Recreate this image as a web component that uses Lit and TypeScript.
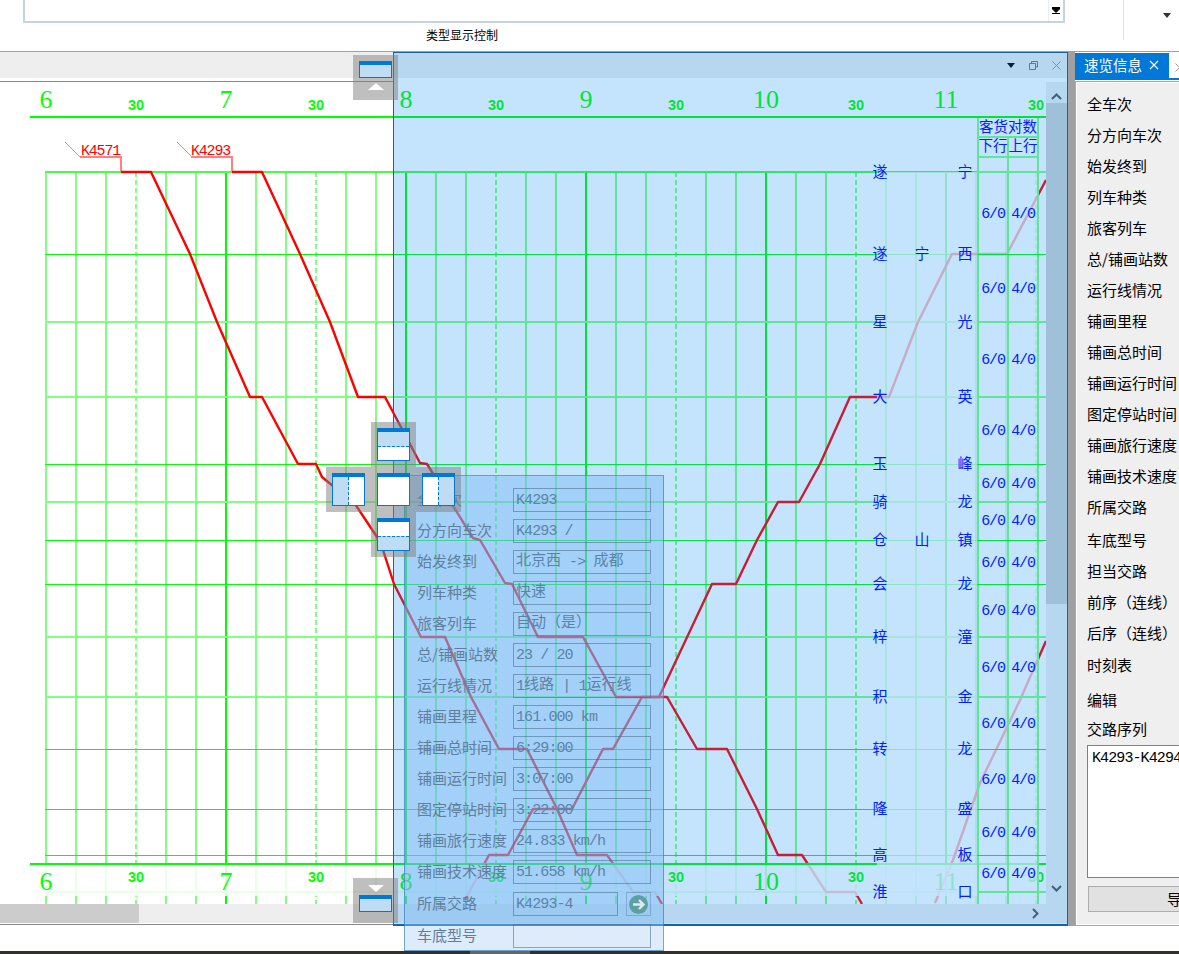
import { LitElement, html, svg, css } from "lit";
import { customElement } from "lit/decorators.js";

type Pt = [number, number];

const HOUR_LABELS = ["6", "7", "8", "9", "10", "11"];

// y of each station row: [y, left char, middle char, right char, thin line?]
const STATIONS: [number, string, string, string, boolean][] = [
  [172, "遂", "", "宁", false],
  [254, "遂", "宁", "西", true],
  [322, "星", "", "光", false],
  [397, "大", "", "英", false],
  [464, "玉", "", "峰", true],
  [502, "骑", "", "龙", false],
  [540, "仓", "山", "镇", true],
  [584, "会", "", "龙", true],
  [637, "梓", "", "潼", false],
  [697, "积", "", "金", false],
  [749, "转", "", "龙", true],
  [809, "隆", "", "盛", true],
  [855, "高", "", "板", true],
  [892, "淮", "", "口", false],
];

const COUNT_ROWS = [214, 289, 360, 431, 484, 521, 563, 611, 668, 724, 780, 833, 874];

const TRAINS: Pt[][] = [
  [[121, 172], [151, 172], [190, 254], [217, 322], [250, 397], [262, 397], [298, 464], [316, 464], [322, 477], [355, 504], [377, 537], [383, 550], [394, 584], [421, 637], [445, 637], [471, 697], [499, 749], [527, 749], [557, 809], [577, 855], [607, 855], [633, 892], [655, 892], [662, 904]],
  [[232, 172], [262, 172], [300, 254], [330, 322], [358, 397], [385, 397], [420, 463], [427, 464], [473, 538], [480, 540], [505, 583], [512, 584], [538, 637], [583, 637], [616, 697], [667, 697], [697, 749], [727, 749], [757, 809], [778, 855], [802, 855], [826, 892], [855, 892], [862, 904]],
  [[465, 900], [489, 855], [508, 855], [533, 809], [572, 809], [603, 749], [613, 749], [642, 697], [659, 697], [712, 584], [736, 584], [757, 540], [778, 502], [799, 502], [820, 464], [850, 397], [889, 397], [918, 322], [952, 254], [1007, 254], [1046, 180]],
  [[935, 903], [953, 860], [980, 783], [1020, 700], [1046, 641]],
];

const FLOAT_ROWS = [
  ["全车次", "K4293"],
  ["分方向车次", "K4293 /"],
  ["始发终到", "北京西 -> 成都"],
  ["列车种类", "快速"],
  ["旅客列车", "自动（是）"],
  ["总/铺画站数", "23 / 20"],
  ["运行线情况", "1线路 | 1运行线"],
  ["铺画里程", "161.000 km"],
  ["铺画总时间", "6:29:00"],
  ["铺画运行时间", "3:07:00"],
  ["图定停站时间", "3:22:00"],
  ["铺画旅行速度", "24.833 km/h"],
  ["铺画技术速度", "51.658 km/h"],
];

const SIDE_LABELS = [
  "全车次", "分方向车次", "始发终到", "列车种类", "旅客列车", "总/铺画站数", "运行线情况",
  "铺画里程", "铺画总时间", "铺画运行时间", "图定停站时间", "铺画旅行速度", "铺画技术速度",
  "所属交路", "车底型号", "担当交路", "前序（连线）", "后序（连线）",
];

// split mixed values so the latin keeps its narrow advance and the CJK stays full width
const runs = (value: string) =>
  value.split(/([\u3000-\u9fff\uff00-\uffef]+)/).map((part, i) =>
    i % 2 ? html`<span class="cjk">${part}</span>` : part);

@customElement("train-graph")
export class TrainGraph extends LitElement {
  static styles = css`
    :host {
      display: block;
      width: 1046px;
      height: 822px;
      flex: none;
    }
    svg {
      display: block;
    }
    .hour {
      font: 26px "Liberation Serif", serif;
      fill: #00ff00;
      text-anchor: middle;
    }
    .half {
      font: bold 14.5px "Liberation Sans", sans-serif;
      fill: #00ff00;
      text-anchor: middle;
    }
    .station {
      font: 15px "Noto Sans CJK SC", sans-serif;
      fill: #0000ff;
      text-anchor: middle;
      dominant-baseline: central;
    }
    .header {
      font: 14.5px "Noto Sans CJK SC", sans-serif;
      fill: #0000ff;
      text-anchor: middle;
      dominant-baseline: central;
    }
    .count {
      font: 15px "Liberation Mono", monospace;
      letter-spacing: -1.2px;
      fill: #0000ff;
      text-anchor: middle;
      dominant-baseline: central;
    }
    .train-no {
      font: 15px "Liberation Mono", monospace;
      letter-spacing: -1.2px;
      fill: #ff0000;
    }
    .crisp {
      shape-rendering: crispEdges;
    }
    .run {
      fill: none;
      stroke: #ff0000;
      stroke-width: 2.4;
      stroke-linejoin: round;
    }
    .leader {
      fill: none;
      stroke: #ff8080;
      stroke-width: 2;
    }
    .leader-thin {
      fill: none;
      stroke: #ff8080;
      stroke-width: 1;
    }
    .dash {
      stroke: #80ff80;
      stroke-width: 2;
      stroke-dasharray: 5 3;
    }
  `;

  private grid() {
    const out = [];
    for (let i = 0; i < 34; i++) {
      const x = 45 + i * 30;
      if (i % 6 === 3) {
        out.push(svg`<line class="dash crisp" x1=${x + 1} x2=${x + 1} y1="172" y2="904"></line>`);
      } else {
        out.push(svg`<rect class="crisp" x=${x} y="172" width="2" height="732"
          fill=${i % 6 === 0 && i > 0 ? "#00ff00" : "#80ff80"}></rect>`);
      }
    }
    for (const [y, , , , thin] of STATIONS) {
      out.push(thin
        ? svg`<rect class="crisp" x="45" y=${y} width="1001" height="1" fill="#00ff00"></rect>`
        : svg`<rect class="crisp" x="45" y=${y - 1} width="1001" height="2" fill=${y === 172 ? "#44ff44" : "#80ff80"}></rect>`);
    }
    return out;
  }

  private rulerLabels(hourY: number, halfY: number) {
    return HOUR_LABELS.map((label, i) => {
      const x = 46 + i * 180;
      return svg`
        <text class="hour" x=${x} y=${hourY}>${label}</text>
        <text class="half" x=${x + 90} y=${halfY}>30</text>`;
    });
  }

  // the count columns on the right sit above the pale station band
  private countColumns() {
    const out = [];
    for (const x of [977, 1037]) {
      out.push(svg`<rect class="crisp" x=${x} y="118" width="2" height="786" fill="#80ff80"></rect>`);
    }
    out.push(svg`<rect class="crisp" x="1007" y="136" width="2" height="768" fill="#80ff80"></rect>`);
    out.push(svg`<rect class="crisp" x="977" y="136" width="62" height="2" fill="#80ff80"></rect>`);
    out.push(svg`<rect class="crisp" x="977" y="156" width="62" height="2" fill="#80ff80"></rect>`);
    for (const [y, , , , thin] of STATIONS) {
      out.push(thin
        ? svg`<rect class="crisp" x="977" y=${y} width="69" height="1" fill="#00ff00"></rect>`
        : svg`<rect class="crisp" x="977" y=${y - 1} width="69" height="2" fill="#80ff80"></rect>`);
    }
    return out;
  }

  render() {
    return html`
      <svg width="1046" height="822" viewBox="0 82 1046 822">
        <rect class="crisp" x="30" y="116" width="1016" height="2" fill="#00ff00"></rect>
        ${this.rulerLabels(108, 110)}
        <text class="train-no" x="81" y="155">K4571</text>
        <text class="train-no" x="191" y="155">K4293</text>
        <path class="leader-thin" d="M65 142 L80 157"></path>
        <path class="leader-thin" d="M177 142 L192 157"></path>
        <path class="leader crisp" d="M80 157 H121 V172"></path>
        <path class="leader crisp" d="M191 157 H232 V172"></path>

        ${this.grid()}
        ${TRAINS.map((t) => svg`<polyline class="run" points=${t.map((p) => p.join(",")).join(" ")}></polyline>`)}

        <rect class="crisp" x="30" y="863" width="1016" height="2" fill="#00ff00"></rect>
        <rect x="0" y="865" width="1046" height="31" fill="#ffffff" fill-opacity="0.82"></rect>
        ${this.rulerLabels(890, 882)}
        <rect x="877" y="172" width="161" height="732" fill="#ffffff" fill-opacity="0.72"></rect>

        ${this.countColumns()}
        <text class="header" x="1008" y="125">客货对数</text>
        <text class="header" x="993" y="144">下行</text>
        <text class="header" x="1023" y="144">上行</text>
        ${STATIONS.map(([y, a, b, c]) => svg`
          <text class="station" x="880" y=${y - 2}>${a}</text>
          <text class="station" x="922" y=${y - 2}>${b}</text>
          <text class="station" x="965" y=${y - 2}>${c}</text>`)}
        ${COUNT_ROWS.map((y) => svg`
          <text class="count" x="993" y=${y}>6/0</text>
          <text class="count" x="1023" y=${y}>4/0</text>`)}
      </svg>
    `;
  }
}

@customElement("app-root")
export class AppRoot extends LitElement {
  static styles = css`
    :host {
      display: flex;
      flex-direction: column;
      position: relative;
      width: 1179px;
      height: 954px;
      overflow: hidden;
      background: #fff;
      font: 15px "Noto Sans CJK SC", sans-serif;
      color: #000;
    }

    /* top ribbon */
    .ribbon {
      display: flex;
      height: 51px;
      flex: none;
    }
    .ribbon-group {
      width: 1123px;
      height: 40px;
      border-right: 1px solid #e0e0e0;
      box-sizing: content-box;
    }
    .combo {
      display: flex;
      justify-content: flex-end;
      margin-left: 23px;
      width: 1042px;
      height: 23px;
      box-sizing: border-box;
      border: 2px solid #c5d2e0;
      border-top: none;
    }
    .combo-btn {
      width: 14px;
      height: 21px;
      display: flex;
      align-items: center;
      justify-content: center;
      border-left: 1px solid #e6eef6;
    }
    .ribbon-label {
      margin: 3px 0 0 426px;
      font-size: 12px;
      line-height: 18px;
    }
    .ribbon-end {
      flex: 1;
      display: flex;
      justify-content: flex-end;
      padding: 13px 8px 0 0;
      box-sizing: border-box;
    }

    /* middle */
    .work {
      display: flex;
      height: 875px;
      flex: none;
      border-top: 1px solid #a0a0a0;
      box-sizing: border-box;
    }
    .main {
      width: 1067px;
      flex: none;
      display: flex;
      flex-direction: column;
    }
    .band {
      height: 26px;
      flex: none;
      background: #eeeeee;
      display: flex;
      justify-content: flex-end;
      align-items: center;
      gap: 14px;
      padding-right: 6px;
    }
    .rule {
      width: 393px;
      height: 1px;
      background: #888;
      flex: none;
    }
    .rule.upper {
      margin-top: 3px;
    }
    .canvas-row {
      display: flex;
      height: 822px;
      flex: none;
    }
    .vbar {
      width: 21px;
      background: #eeeeee;
      display: flex;
      flex-direction: column;
      align-items: center;
    }
    .vbar-top {
      height: 21px;
      display: flex;
      align-items: flex-end;
      justify-content: center;
      padding-bottom: 3px;
      box-sizing: border-box;
    }
    .vbar-thumb {
      width: 100%;
      height: 501px;
      background: #d0d0d0;
    }
    .vbar-end {
      margin-top: auto;
      padding-bottom: 8px;
    }
    .hbar {
      height: 19px;
      flex: none;
      background: #eeeeee;
      display: flex;
      justify-content: space-between;
      align-items: center;
      padding-right: 28px;
    }
    .hbar-thumb {
      width: 139px;
      height: 100%;
      background: #cccccc;
    }
    .rule.lower {
      margin-top: 1px;
    }

    .splitter {
      width: 8px;
      flex: none;
      background: #a0a0a0;
    }

    /* right panel */
    .side {
      flex: 1;
      min-width: 0;
      display: flex;
      flex-direction: column;
      overflow: hidden;
    }
    .tabs {
      display: flex;
      height: 28px;
      flex: none;
      padding-top: 1px;
      box-sizing: border-box;
      border-bottom: 2px solid #0078d7;
    }
    .tab {
      width: 94px;
      flex: none;
      background: #0078d7;
      color: #fff;
      display: flex;
      align-items: center;
      padding: 0 0 2px 9px;
      box-sizing: border-box;
      gap: 7px;
      font-size: 14.5px;
    }
    .tab-next {
      display: flex;
      padding: 10px 0 0 6px;
    }
    .side-body {
      flex: 1;
      margin-top: 1px;
      border: 1px solid #a8a8a8;
      border-right: none;
      outline: 1px solid #fff;
      outline-offset: -2px;
      background: #efefef;
      padding: 6px 0 0 11px;
      width: 200px;
      box-sizing: border-box;
      display: flex;
      flex-direction: column;
    }
    .side-row {
      height: 31px;
      line-height: 31px;
      flex: none;
      white-space: nowrap;
    }
    .side-row.loose {
      margin-top: 2px;
    }
    .side-row.timetable {
      margin-top: 1px;
    }
    .edit-row {
      margin-top: 4px;
    }
    .seq-row {
      margin-top: -2px;
    }
    .seq {
      width: 180px;
      height: 133px;
      margin-top: 1px;
      flex: none;
      border: 1px solid #808080;
      background: #fff;
      box-sizing: border-box;
      padding: 5px 4px;
      font: 15px/16px "Liberation Mono", monospace;
      letter-spacing: -0.9px;
    }
    .export {
      width: 188px;
      height: 26px;
      margin: 8px 0 0 1px;
      flex: none;
      background: #e1e1e1;
      border: 1px solid #adadad;
      box-sizing: border-box;
      text-align: center;
      line-height: 24px;
    }

    /* bottom */
    .foot {
      flex: 1;
    }
    .taskbar {
      height: 3px;
      flex: none;
      background: #332f2c;
      display: flex;
      padding-left: 470px;
    }
    .taskbar-lit {
      width: 60px;
      background: #666;
    }

    /* dock preview, above the graph */
    .preview {
      position: absolute;
      left: 393px;
      top: 52px;
      width: 675px;
      height: 874px;
      box-sizing: border-box;
      background: rgba(0, 135, 243, 0.23);
      border: 1px solid #1565a5;
      border-bottom-width: 2px;
    }

    /* floating info window being dragged */
    .float {
      position: absolute;
      left: 404px;
      top: 475px;
      width: 260px;
      height: 476px;
      box-sizing: border-box;
      border: 1px solid rgba(30, 110, 180, 0.55);
      background: linear-gradient(rgba(130, 190, 245, 0.5) 450px, rgba(170, 205, 245, 0.4) 450px);
      padding: 12px 12px 0 12px;
      display: flex;
      flex-direction: column;
      gap: 7px;
      color: #5f7f9c;
    }
    .f-row {
      display: flex;
      height: 24px;
      flex: none;
      align-items: center;
    }
    .f-row.low {
      margin-top: 1px;
    }
    .f-label {
      width: 96px;
      flex: none;
      white-space: nowrap;
      margin-bottom: 4px;
    }
    .f-input {
      width: 138px;
      height: 24px;
      box-sizing: border-box;
      border: 1px solid rgba(70, 105, 140, 0.55);
      padding-left: 2px;
      white-space: nowrap;
      color: #5a83a8;
      font: 15px/24px "Liberation Mono", "Noto Sans CJK SC", monospace;
      letter-spacing: -0.9px;
    }
    .f-input.short {
      width: 105px;
    }
    .cjk {
      font-family: "Noto Sans CJK SC", sans-serif;
      letter-spacing: 0;
      line-height: 16px;
      vertical-align: 1px;
    }
    .f-go {
      width: 25px;
      height: 24px;
      margin-left: 8px;
      box-sizing: border-box;
      border: 1px solid rgba(70, 105, 140, 0.35);
      display: flex;
      align-items: center;
      justify-content: center;
    }

    /* dock guides */
    .cross {
      position: absolute;
      left: 326px;
      top: 422px;
      display: grid;
      grid-template-columns: repeat(3, 45px);
      grid-template-rows: repeat(3, 45px);
    }
    .cell {
      background: rgba(128, 128, 128, 0.5);
      padding: 6px;
      box-sizing: border-box;
    }
    .c-top {
      grid-area: 1 / 2;
    }
    .c-left {
      grid-area: 2 / 1;
    }
    .c-mid {
      grid-area: 2 / 2;
    }
    .c-right {
      grid-area: 2 / 3;
    }
    .c-bottom {
      grid-area: 3 / 2;
    }
    .pane {
      width: 33px;
      height: 33px;
      box-sizing: border-box;
      border: 1px solid #0078d7;
      border-top-width: 4px;
      background: #fff;
      display: flex;
    }
    .pane.col {
      flex-direction: column;
    }
    .half {
      flex: 1;
    }
    .half.fill {
      background: #bfdcf5;
    }
    .half.dash-b {
      border-bottom: 1px dashed #0078d7;
    }
    .half.dash-t {
      border-top: 1px dashed #0078d7;
    }
    .half.dash-r {
      border-right: 1px dashed #0078d7;
    }
    .half.dash-l {
      border-left: 1px dashed #0078d7;
    }
    .edge {
      position: absolute;
      left: 353px;
      width: 45px;
      height: 45px;
      box-sizing: border-box;
      padding: 6px;
      background: rgba(128, 128, 128, 0.5);
      display: flex;
      flex-direction: column;
      align-items: center;
    }
    .edge.up {
      top: 55px;
      gap: 5px;
    }
    .edge.down {
      top: 878px;
      gap: 3px;
      padding-top: 7px;
    }
    .edge-pane {
      width: 33px;
      height: 17px;
      box-sizing: border-box;
      border: 1px solid #0078d7;
      border-top-width: 4px;
      background: #bfdcf5;
      flex: none;
    }
    .tri {
      width: 0;
      height: 0;
      border-left: 8px solid transparent;
      border-right: 8px solid transparent;
      flex: none;
    }
    .tri.up {
      border-bottom: 7px solid #fff;
    }
    .tri.down {
      border-top: 7px solid #fff;
    }
  `;

  private floatRows() {
    return FLOAT_ROWS.map(([k, v]) => html`
      <div class="f-row">
        <div class="f-label">${k}</div>
        <div class="f-input">${runs(v)}</div>
      </div>`);
  }

  render() {
    return html`
      <div class="ribbon">
        <div class="ribbon-group">
          <div class="combo">
            <div class="combo-btn">
              <svg width="8" height="7" viewBox="0 0 8 7">
                <path d="M0 0.5H8M0 1.5H8L4 5.5ZM0 6.5H8" fill="#000" stroke="#000" stroke-width="1"></path>
              </svg>
            </div>
          </div>
          <div class="ribbon-label">类型显示控制</div>
        </div>
        <div class="ribbon-end">
          <svg width="8" height="5" viewBox="0 0 8 5"><path d="M0 0H8L4 5Z" fill="#333"></path></svg>
        </div>
      </div>

      <div class="work">
        <div class="main">
          <div class="band">
            <svg width="8" height="5" viewBox="0 0 8 5"><path d="M0 0H8L4 5Z" fill="#000"></path></svg>
            <svg width="9" height="9" viewBox="0 0 9 9">
              <path d="M2.5 2.5V0.5H8.5V6H6.5M0.5 2.5H6.5V8.5H0.5Z" fill="none" stroke="#777" stroke-width="1"></path>
            </svg>
            <svg width="9" height="9" viewBox="0 0 9 9">
              <path d="M0.5 0.5L8.5 8.5M8.5 0.5L0.5 8.5" fill="none" stroke="#999" stroke-width="1"></path>
            </svg>
          </div>
          <div class="rule upper"></div>
          <div class="canvas-row">
            <train-graph></train-graph>
            <div class="vbar">
              <div class="vbar-top">
                <svg width="11" height="7" viewBox="0 0 11 7">
                  <path d="M1 6L5.5 1.5L10 6" fill="none" stroke="#555" stroke-width="2"></path>
                </svg>
              </div>
              <div class="vbar-thumb"></div>
              <div class="vbar-end">
                <svg width="11" height="7" viewBox="0 0 11 7">
                  <path d="M1 1L5.5 5.5L10 1" fill="none" stroke="#555" stroke-width="2"></path>
                </svg>
              </div>
            </div>
          </div>
          <div class="hbar">
            <div class="hbar-thumb"></div>
            <svg width="7" height="11" viewBox="0 0 7 11">
              <path d="M1 1L5.5 5.5L1 10" fill="none" stroke="#555" stroke-width="2"></path>
            </svg>
          </div>
          <div class="rule lower"></div>
        </div>
        <div class="splitter"></div>
        <div class="side">
          <div class="tabs">
            <div class="tab">
              <span>速览信息</span>
              <svg width="10" height="10" viewBox="0 0 10 10">
                <path d="M1 1L9 9M9 1L1 9" fill="none" stroke="#fff" stroke-width="1.2"></path>
              </svg>
            </div>
            <div class="tab-next">
              <svg width="9" height="9" viewBox="0 0 9 9">
                <path d="M0.5 0.5L8.5 8.5M8.5 0.5L0.5 8.5" fill="none" stroke="#999" stroke-width="1"></path>
              </svg>
            </div>
          </div>
          <div class="side-body">
            ${SIDE_LABELS.map((t, i) => html`<div class="side-row ${i === 14 ? "loose" : ""}">${t}</div>`)}
            <div class="side-row timetable">时刻表</div>
            <div class="side-row edit-row">编辑</div>
            <div class="side-row seq-row">交路序列</div>
            <div class="seq">K4293-K4294</div>
            <div class="export">导出</div>
          </div>
        </div>
      </div>

      <div class="foot"></div>
      <div class="taskbar"><div class="taskbar-lit"></div></div>

      <div class="preview"></div>

      <div class="float">
        ${this.floatRows()}
        <div class="f-row low">
          <div class="f-label">所属交路</div>
          <div class="f-input short">K4293-4</div>
          <div class="f-go">
            <svg width="21" height="21" viewBox="0 0 21 21">
              <circle cx="10.5" cy="10.5" r="9.5" fill="#5e9fa3"></circle>
              <path d="M5 10.5H15M11 6L15.5 10.5L11 15" fill="none" stroke="#dcecec" stroke-width="2.4"></path>
            </svg>
          </div>
        </div>
        <div class="f-row low">
          <div class="f-label">车底型号</div>
          <div class="f-input"></div>
        </div>
      </div>

      <div class="cross">
        <div class="cell c-top">
          <div class="pane col"><div class="half fill dash-b"></div><div class="half"></div></div>
        </div>
        <div class="cell c-left">
          <div class="pane"><div class="half fill dash-r"></div><div class="half"></div></div>
        </div>
        <div class="cell c-mid"><div class="pane"></div></div>
        <div class="cell c-right">
          <div class="pane"><div class="half"></div><div class="half fill dash-l"></div></div>
        </div>
        <div class="cell c-bottom">
          <div class="pane col"><div class="half"></div><div class="half fill dash-t"></div></div>
        </div>
      </div>

      <div class="edge up">
        <div class="edge-pane"></div>
        <div class="tri up"></div>
      </div>
      <div class="edge down">
        <div class="tri down"></div>
        <div class="edge-pane"></div>
      </div>
    `;
  }
}
